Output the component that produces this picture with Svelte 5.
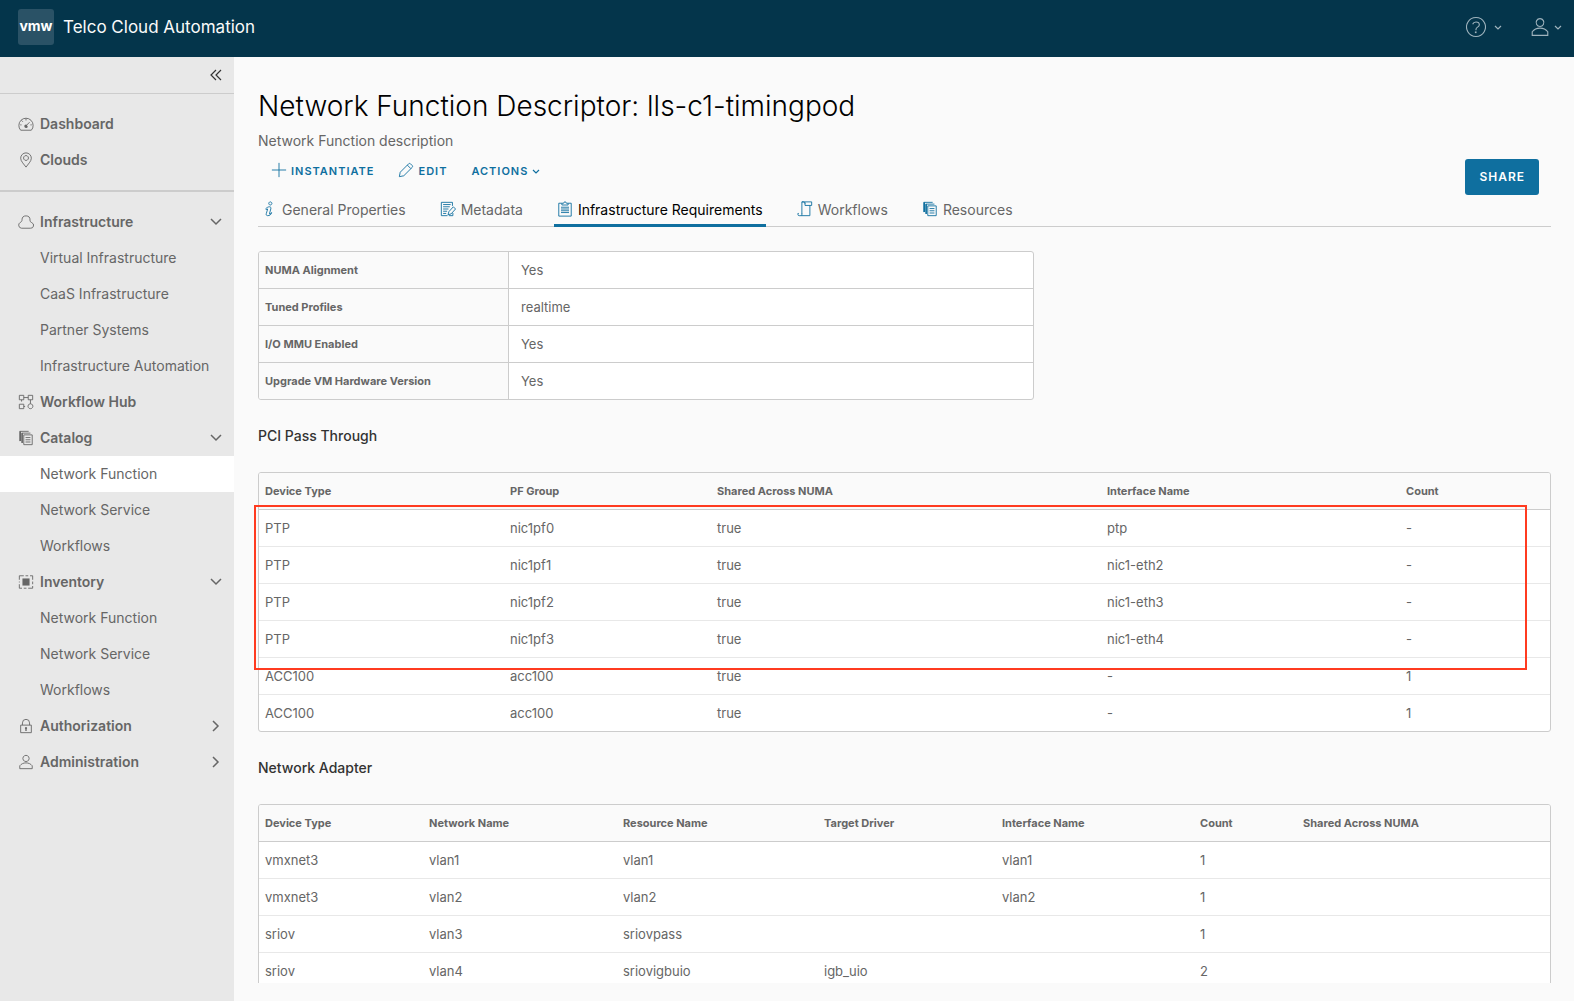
<script lang="ts">
	interface NavItem {
		label: string;
		icon?: string;
		open?: boolean;
		children?: string[];
	}

	interface Column {
		label: string;
		size: number;
	}

	// outlines on a 36x36 grid; `fill` holds the solid parts
	const icons: Record<string, { line?: string; fill?: string }> = {
		dashboard: {
			line: 'M9 32H6A15 15 0 0 1 2 21a16 16 0 0 1 32 0A15 15 0 0 1 30 32H9M18 6v4M5 20h3M28 20h3M8 10l3 3M18 22l8-8',
			fill: 'M18 19a4 4 0 1 0 4 5L20 20z'
		},
		pin: { line: 'M18 34C14 28 6 21 6 14a12 12 0 0 1 24 0C30 21 22 28 18 34ZM18 8a5.5 5.5 0 1 0 .01 0Z' },
		cloud: { line: 'M8 32h20a6.500 6.500 0 0 0 3-12.500C28 18 27 17 27 13.500a9 9 0 0 0-18-.5c0 3-1 4.500-4 6A7 7 0 0 0 8 32Z' },
		flow: { line: 'M3 3h10v10H3zM23 3h10v10H23zM3 23h10v10H3zM28 22a5.5 5.5 0 1 0 .01 0ZM13 8h10M28 13v9M8 13v4M13 28h3' },
		copies: {
			line: 'M13 11h19v22H13zM9 29V7h19M4 25V3h20M17 17h11M17 22h11M17 27h11',
			fill: 'M4 3h3v22H4zM8 7h3v22H8z'
		},
		inventory: {
			line: 'M3 13V4h10M17 4h6M27 4h6v9M33 17v6M33 27v5H23M19 32h-6M9 32H3v-9M3 19v-2',
			fill: 'M10 10h16v16H10z'
		},
		lock: {
			line: 'M6 16h24v17H6zM10 16v-5a8 8 0 0 1 16 0v5',
			fill: 'M18 20a2.5 2.5 0 0 0-1.500 4.500V29h3v-4.500A2.500 2.500 0 0 0 18 20z'
		},
		user: { line: 'M18 3a7 7 0 1 0 .01 0ZM4 33v-6.500C7.500 22 12.500 20 18 20s10.500 2 14 6.500V33Z' },
		help: {
			line: 'M18 1a17 17 0 1 0 .01 0ZM12 13c1-3 3-4 6-4 3.500 0 6 2 6 5 0 4.500-6 4-6 8v2',
			fill: 'M16 26h3v3h-3z'
		},
		plus: { line: 'M18 2v32M2 18h32' },
		pencil: { line: 'M3 33l2-10L24 4a3 3 0 0 1 4 0l4 4a3 3 0 0 1 0 4L13 31ZM21 7l8 8' },
		info: { line: 'M21 2a3.500 3.500 0 1 0 .01 0ZM11 17c2-2 5-4 8-4s4 2 3 5l-3 11c2 0 3-1 5-3-1 5-5 7-9 7-3 0-4-2-3-5l3-10c-1 0-2 .5-3 2Z' },
		metadata: { line: 'M28 11V3H3v30h14M7 8h17M7 13h15M7 18h12M7 23h9M7 28h7M18 31l2-7L30 13l5 5L25 29ZM29 27v6h-9' },
		clipboard: { line: 'M11 5H4v29h28V5h-7M11 9V5h4a3 3 0 0 1 6 0h4v4ZM9 14h18M9 18h18M9 22h18M9 26h18' },
		script: { line: 'M11 29V2h22v8H18V3M29 10v23H5a3 3 0 0 1-3-3v-2h2M11 2h3a4 4 0 0 1 4 4M11 28v5' }
	};

	const topNav: NavItem[] = [
		{ label: 'Dashboard', icon: 'dashboard' },
		{ label: 'Clouds', icon: 'pin' }
	];

	let sections = $state<NavItem[]>([
		{
			label: 'Infrastructure',
			icon: 'cloud',
			open: true,
			children: ['Virtual Infrastructure', 'CaaS Infrastructure', 'Partner Systems', 'Infrastructure Automation']
		},
		{ label: 'Workflow Hub', icon: 'flow' },
		{ label: 'Catalog', icon: 'copies', open: true, children: ['Network Function', 'Network Service', 'Workflows'] },
		{ label: 'Inventory', icon: 'inventory', open: true, children: ['Network Function', 'Network Service', 'Workflows'] },
		{ label: 'Authorization', icon: 'lock', open: false, children: [] },
		{ label: 'Administration', icon: 'user', open: false, children: [] }
	]);

	let selected = $state('Catalog/Network Function');

	const tabs = [
		{ label: 'General Properties', icon: 'info' },
		{ label: 'Metadata', icon: 'metadata' },
		{ label: 'Infrastructure Requirements', icon: 'clipboard' },
		{ label: 'Workflows', icon: 'script' },
		{ label: 'Resources', icon: 'copies' }
	];

	let activeTab = $state('Infrastructure Requirements');

	const requirements = [
		['NUMA Alignment', 'Yes'],
		['Tuned Profiles', 'realtime'],
		['I/O MMU Enabled', 'Yes'],
		['Upgrade VM Hardware Version', 'Yes']
	];

	const pciColumns: Column[] = [
		{ label: 'Device Type', size: 245 },
		{ label: 'PF Group', size: 207 },
		{ label: 'Shared Across NUMA', size: 390 },
		{ label: 'Interface Name', size: 299 },
		{ label: 'Count', size: 150 }
	];

	const pciRows = [
		['PTP', 'nic1pf0', 'true', 'ptp', '-'],
		['PTP', 'nic1pf1', 'true', 'nic1-eth2', '-'],
		['PTP', 'nic1pf2', 'true', 'nic1-eth3', '-'],
		['PTP', 'nic1pf3', 'true', 'nic1-eth4', '-'],
		['ACC100', 'acc100', 'true', '-', '1'],
		['ACC100', 'acc100', 'true', '-', '1']
	];

	const adapterColumns: Column[] = [
		{ label: 'Device Type', size: 164 },
		{ label: 'Network Name', size: 194 },
		{ label: 'Resource Name', size: 201 },
		{ label: 'Target Driver', size: 178 },
		{ label: 'Interface Name', size: 198 },
		{ label: 'Count', size: 103 },
		{ label: 'Shared Across NUMA', size: 253 }
	];

	const adapterRows = [
		['vmxnet3', 'vlan1', 'vlan1', '', 'vlan1', '1', ''],
		['vmxnet3', 'vlan2', 'vlan2', '', 'vlan2', '1', ''],
		['sriov', 'vlan3', 'sriovpass', '', '', '1', ''],
		['sriov', 'vlan4', 'sriovigbuio', 'igb_uio', '', '2', '']
	];

	function share(columns: Column[], size: number): number {
		const total = columns.reduce((sum, c) => sum + c.size, 0);
		return (size / total) * 100;
	}
</script>

{#snippet icon(name: string)}
	<svg class="icon" viewBox="0 0 36 36" aria-hidden="true">
		{#if icons[name].line}
			<path d={icons[name].line} fill="none" stroke="currentColor" stroke-width="2" />
		{/if}
		{#if icons[name].fill}
			<path d={icons[name].fill} fill="currentColor" />
		{/if}
	</svg>
{/snippet}

{#snippet caret(open: boolean)}
	<svg class="caret" viewBox="0 0 12 12" aria-hidden="true">
		<path d={open ? 'M1 3l5 5 5-5' : 'M3 1l5 5-5 5'} fill="none" stroke="currentColor" stroke-width="1.5" />
	</svg>
{/snippet}

{#snippet smallCaret()}
	<svg class="small-caret" viewBox="0 0 8 8" aria-hidden="true">
		<path d="M1 3l3 3 3-3" fill="none" stroke="currentColor" stroke-width="1.2" />
	</svg>
{/snippet}

{#snippet grid(columns: Column[], rows: string[][])}
	<table class="grid">
		<colgroup>
			{#each columns as col}
				<col style="width: {share(columns, col.size)}%" />
			{/each}
		</colgroup>
		<thead>
			<tr>
				{#each columns as col}
					<th scope="col">{col.label}</th>
				{/each}
			</tr>
		</thead>
		<tbody>
			{#each rows as row}
				<tr>
					{#each row as cell}
						<td>{cell}</td>
					{/each}
				</tr>
			{/each}
		</tbody>
	</table>
{/snippet}

<div class="app">
	<header class="topbar">
		<a class="brand" href="#home">
			<span class="logo">vmw</span>
			<span class="product">Telco Cloud Automation</span>
		</a>
		<div class="top-actions">
			<button class="top-btn help" aria-label="Help">
				{@render icon('help')}
				{@render smallCaret()}
			</button>
			<button class="top-btn" aria-label="Account">
				{@render icon('user')}
				{@render smallCaret()}
			</button>
		</div>
	</header>

	<div class="body">
		<nav class="sidebar">
			<div class="collapse-row">
				<button class="collapse" aria-label="Collapse menu">
					<svg viewBox="0 0 12 12" aria-hidden="true">
						<path d="M6 1L1 6l5 5M11 1L6 6l5 5" fill="none" stroke="currentColor" stroke-width="1.2" />
					</svg>
				</button>
			</div>

			<div class="nav-group top">
				{#each topNav as item}
					<a class="nav-row" href="#{item.label}">
						{@render icon(item.icon ?? '')}
						<span>{item.label}</span>
					</a>
				{/each}
			</div>

			<div class="nav-group">
				{#each sections as section}
					{#if section.children}
						<button class="nav-row" aria-expanded={section.open} onclick={() => { section.open = !section.open; }}>
							{@render icon(section.icon ?? '')}
							<span>{section.label}</span>
							{@render caret(section.open ?? false)}
						</button>
						{#if section.open}
							{#each section.children as child}
								{@const key = `${section.label}/${child}`}
								<a
									class="nav-child"
									class:selected={selected === key}
									href="#{key}"
									onclick={() => { selected = key; }}
								>{child}</a>
							{/each}
						{/if}
					{:else}
						<a class="nav-row" href="#{section.label}">
							{@render icon(section.icon ?? '')}
							<span>{section.label}</span>
						</a>
					{/if}
				{/each}
			</div>
		</nav>

		<main class="content">
			<h1>Network Function Descriptor: lls-c1-timingpod</h1>
			<p class="description">Network Function description</p>

			<div class="toolbar">
				<div class="links">
					<button class="link-btn">{@render icon('plus')}Instantiate</button>
					<button class="link-btn">{@render icon('pencil')}Edit</button>
					<button class="link-btn">Actions{@render smallCaret()}</button>
				</div>
				<button class="share">Share</button>
			</div>

			<div class="tabs" role="tablist">
				{#each tabs as tab}
					<button
						class="tab"
						class:active={activeTab === tab.label}
						role="tab"
						aria-selected={activeTab === tab.label}
						onclick={() => { activeTab = tab.label; }}
					>
						{@render icon(tab.icon)}
						{tab.label}
					</button>
				{/each}
			</div>

			<table class="grid vertical">
				<tbody>
					{#each requirements as [name, value]}
						<tr>
							<th scope="row">{name}</th>
							<td>{value}</td>
						</tr>
					{/each}
				</tbody>
			</table>

			<h2>PCI Pass Through</h2>
			<div class="marked">
				{@render grid(pciColumns, pciRows)}
				<div class="marker"></div>
			</div>

			<h2>Network Adapter</h2>
			{@render grid(adapterColumns, adapterRows)}
		</main>
	</div>
</div>

<style>
	:global(body) {
		margin: 0;
	}

	.app {
		display: flex;
		flex-direction: column;
		height: 100vh;
		overflow: hidden;
		background: #fafafa;
		color: #666;
		font-family: Metropolis, Inter, 'Open Sans', sans-serif;
		font-size: 14px;
		line-height: 20px;
	}

	button {
		background: none;
		border: none;
		padding: 0;
		margin: 0;
		font: inherit;
		color: inherit;
		cursor: pointer;
	}

	a {
		color: inherit;
		text-decoration: none;
	}

	.icon {
		width: 16px;
		height: 16px;
		flex-shrink: 0;
	}

	.caret {
		width: 12px;
		height: 12px;
		margin-left: auto;
	}

	.small-caret {
		width: 8px;
		height: 8px;
		flex-shrink: 0;
	}

	.topbar {
		display: flex;
		align-items: center;
		justify-content: space-between;
		flex-shrink: 0;
		height: 57px;
		padding: 0 12px 0 18px;
		box-sizing: border-box;
		background: #04354b;
		color: #fafafa;
	}

	.brand {
		display: flex;
		align-items: center;
		gap: 9px;
		padding-bottom: 3px;
	}

	.logo {
		width: 36px;
		height: 36px;
		line-height: 34px;
		border-radius: 3px;
		background: #2a5266;
		color: #fff;
		font-size: 14px;
		font-weight: 700;
		text-align: center;
	}

	.product {
		font-size: 17px;
	}

	.top-actions {
		display: flex;
		gap: 28px;
		padding-bottom: 3px;
		color: #9fb3bd;
	}

	.top-btn {
		display: flex;
		align-items: center;
		gap: 4px;
	}

	.top-btn .icon {
		width: 20px;
		height: 20px;
	}

	.top-btn.help {
		gap: 8px;
	}

	.body {
		display: flex;
		flex: 1;
		min-height: 0;
	}

	.sidebar {
		width: 234px;
		flex-shrink: 0;
		background: #e8e8e8;
	}

	.collapse-row {
		display: flex;
		justify-content: flex-end;
		height: 36px;
		padding-right: 12px;
		border-bottom: 1px solid #ccc;
	}

	.collapse {
		display: flex;
		align-items: center;
		color: #333;
	}

	.collapse svg {
		width: 12px;
		height: 12px;
	}

	.nav-group {
		padding: 12px 0;
	}

	.nav-group.top {
		border-bottom: 2px solid #ccc;
	}

	.nav-row {
		display: flex;
		align-items: center;
		gap: 6px;
		width: 100%;
		height: 36px;
		padding: 0 12px 0 18px;
		box-sizing: border-box;
		font-weight: 600;
	}

	.nav-child {
		display: block;
		padding: 8px 12px 8px 40px;
	}

	.nav-child.selected {
		background: #fff;
	}

	.content {
		flex: 1;
		min-width: 0;
		margin-bottom: 18px;
		padding: 31px 23px 0 24px;
		overflow: hidden;
	}

	h1 {
		margin: 0;
		color: #000;
		font-size: 28px;
		font-weight: 300;
		line-height: 36px;
	}

	.description {
		margin: 7px 0 8px;
	}

	.toolbar {
		display: flex;
		align-items: flex-start;
		justify-content: space-between;
		padding-right: 12px;
	}

	.links {
		display: flex;
		padding-left: 1px;
	}

	.link-btn {
		display: flex;
		align-items: center;
		gap: 4px;
		height: 24px;
		padding: 0 12px;
		color: #0f6f9f;
		font-size: 11px;
		font-weight: 600;
		letter-spacing: 1px;
		text-transform: uppercase;
	}

	.link-btn .icon,
	.tab .icon {
		margin-bottom: 2px;
	}

	.share {
		height: 36px;
		padding: 0 14px;
		border-radius: 3px;
		background: #0f6f9f;
		color: #fff;
		font-size: 12px;
		font-weight: 600;
		letter-spacing: 1px;
		text-transform: uppercase;
	}

	.tabs {
		display: flex;
		gap: 28px;
		margin-bottom: 24px;
		box-shadow: inset 0 -1px #ccc;
	}

	.tab {
		display: flex;
		align-items: center;
		gap: 5px;
		height: 32px;
		padding: 0 3px 2px;
	}

	.tab .icon {
		color: #0f6f9f;
	}

	.tab.active {
		color: #000;
		box-shadow: inset 0 -3px #0f6f9f;
	}

	h2 {
		margin: 24px 0;
		color: #333;
		font-size: 14px;
		font-weight: 500;
		line-height: 24px;
	}

	.grid {
		width: 100%;
		table-layout: fixed;
		border: 1px solid #ccc;
		border-radius: 3px;
		border-spacing: 0;
		background: #fff;
		font-size: 13px;
		overflow: hidden;
	}

	.grid th,
	.grid td {
		height: 36px;
		padding: 0 6px;
		border-bottom: 1px solid #e8e8e8;
		text-align: left;
	}

	.grid th {
		border-bottom-color: #ccc;
		background: #fafafa;
		font-size: 11px;
		font-weight: 700;
	}

	.grid tbody tr:last-child > * {
		border-bottom: none;
	}

	.vertical {
		width: 60%;
	}

	.grid.vertical th {
		width: 237px;
		border-right: 1px solid #ccc;
	}

	.grid.vertical td {
		padding-left: 12px;
		border-bottom-color: #ccc;
	}

	.marked {
		position: relative;
	}

	/* spans the PTP rows */
	.marker {
		position: absolute;
		top: 33px;
		left: -4px;
		right: 24px;
		height: 161px;
		border: 2px solid #ff3b20;
		pointer-events: none;
	}
</style>
